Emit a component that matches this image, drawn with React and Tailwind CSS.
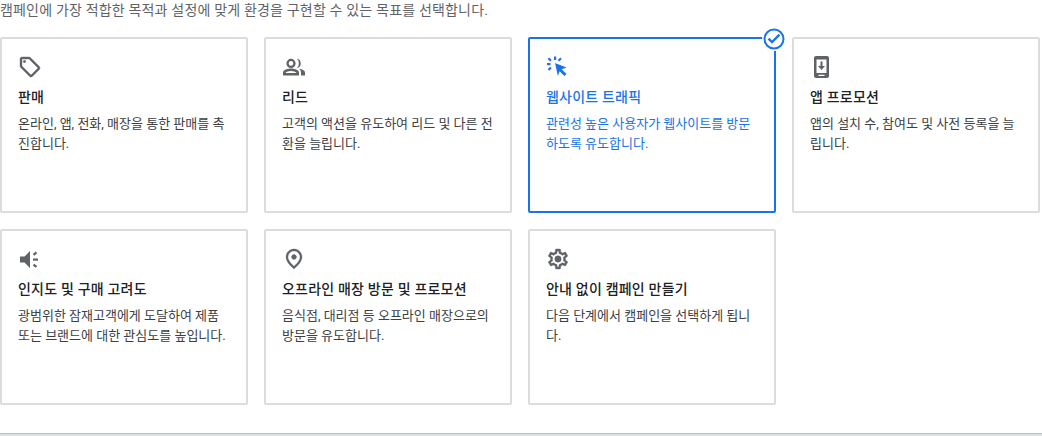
const goals = [
  { icon: "tag", title: "판매", text: "온라인, 앱, 전화, 매장을 통한 판매를 촉진합니다." },
  { icon: "people", title: "리드", text: "고객의 액션을 유도하여 리드 및 다른 전환을 늘립니다." },
  { icon: "click", title: "웹사이트 트래픽", text: "관련성 높은 사용자가 웹사이트를 방문하도록 유도합니다.", selected: true },
  { icon: "phone", title: "앱 프로모션", text: "앱의 설치 수, 참여도 및 사전 등록을 늘립니다." },
  { icon: "speaker", title: "인지도 및 구매 고려도", text: "광범위한 잠재고객에게 도달하여 제품 또는 브랜드에 대한 관심도를 높입니다." },
  { icon: "pin", title: "오프라인 매장 방문 및 프로모션", text: "음식점, 대리점 등 오프라인 매장으로의 방문을 유도합니다." },
  { icon: "gear", title: "안내 없이 캠페인 만들기", text: "다음 단계에서 캠페인을 선택하게 됩니다." },
];

const Icon = ({ name }) => {
  const paths = {
    tag: (
      <g stroke="currentColor" strokeWidth="0.4">
        <path d="M21.41 11.58l-9-9C12.05 2.22 11.55 2 11 2H4c-1.1 0-2 .9-2 2v7c0 .55.22 1.05.59 1.42l9 9c.36.36.86.58 1.41.58s1.05-.22 1.41-.59l7-7c.37-.36.59-.86.59-1.41s-.23-1.06-.59-1.42zM13 20.01L4 11V4h7v-.01l9 8.99-7 7.02z" />
        <circle cx="6.5" cy="6.5" r="1.2" />
      </g>
    ),
    people: (
      <path
        fillRule="evenodd"
        d="M9 3.800a4.600 4.600 0 1 1 0 9.200 4.600 4.600 0 0 1 0-9.200zm0 2.300a2.300 2.300 0 1 0 0 4.600 2.300 2.300 0 0 0 0-4.600zM9 13.600c3 0 8 1.400 8 4V20.400H1v-2.800c0-2.600 5-4 8-4zm0 2.300c-2.400 0-5 .8-5.600 2.200h11.200C14 16.700 11.400 15.900 9 15.900zM15 3.800a4.700 4.700 0 0 1 0 9.200 6.500 6.500 0 0 0 0-9.200zM17 13.700c2.800.4 6 1.600 6 3.700v3h-4v-2.800c0-1.500-.8-2.900-2-3.900z"
      />
    ),
    click: (
      <>
        <path d="M9 8l11.500 4.500-4.800 1.700 4.800 4.800-2.100 2.100-4.800-4.800-1.700 4.800z" />
        <rect x="8" y="1.500" width="2.200" height="3.500" />
        <rect x="1" y="8" width="3.500" height="2.200" />
        <path d="M3.200 2.400l2.500 2.500-1.500 1.500-2.500-2.500zM14.300 2.400l1.500 1.500-2.500 2.500-1.500-1.500zM4.200 11.800l1.500 1.500-2.500 2.500-1.500-1.500z" />
      </>
    ),
    phone: (
      <path
        fillRule="evenodd"
        d="M6 1h11c1.100 0 2 .9 2 2v18c0 1.100-.9 2-2 2H6c-1.100 0-2-.9-2-2V3c0-1.100.9-2 2-2zm.5 3.500V18h10V4.500h-10zM8.500 19.800v1.300h6v-1.300h-6zM10.500 6.500h2V11h2.500l-3.500 4L8 11h2.500z"
      />
    ),
    speaker: (
      <>
        <path d="M2 9.500h4.500L12 4v17l-5.500-5.500H2z" />
        <rect x="15" y="11.500" width="5" height="2.200" />
        <path d="M14.800 7l3-2.400 1.400 1.700-3 2.400zM16.200 16.700l3 2.400-1.400 1.700-3-2.400z" />
      </>
    ),
    pin: (
      <g stroke="currentColor" strokeWidth="0.3">
        <path
          fillRule="evenodd"
          d="M12 12.500c-1.400 0-2.500-1.100-2.500-2.500s1.100-2.500 2.500-2.500 2.500 1.100 2.500 2.500-1.100 2.500-2.500 2.500zm6-2.300C18 6.570 15.350 4 12 4s-6 2.570-6 6.200c0 2.340 1.950 5.440 6 9.140 4.050-3.700 6-6.800 6-9.140zM12 2c4.200 0 8 3.220 8 8.200 0 3.320-2.670 7.250-8 11.800-5.330-4.550-8-8.480-8-11.800C4 5.220 7.800 2 12 2z"
        />
      </g>
    ),
    gear: (
      <g stroke="currentColor" strokeWidth="0.4">
        <path d="M19.430 12.980c.04-.32.07-.64.07-.98 0-.34-.03-.66-.07-.98l2.110-1.650c.19-.15.24-.42.12-.64l-2-3.460c-.09-.16-.26-.25-.44-.25-.06 0-.12.01-.17.03l-2.490 1c-.52-.4-1.080-.73-1.690-.98l-.38-2.650C14.460 2.180 14.250 2 14 2h-4c-.25 0-.46.18-.49.42l-.38 2.650c-.61.25-1.170.59-1.690.98l-2.490-1c-.06-.02-.12-.03-.18-.03-.17 0-.34.09-.43.25l-2 3.460c-.13.22-.07.49.12.64l2.110 1.650c-.04.32-.07.65-.07.98 0 .33.03.66.07.98l-2.110 1.650c-.19.15-.24.42-.12.64l2 3.460c.09.16.26.25.44.25.06 0 .12-.01.17-.03l2.490-1c.52.4 1.080.73 1.690.98l.38 2.650c.03.24.24.42.49.42h4c.25 0 .46-.18.49-.42l.38-2.650c.61-.25 1.170-.59 1.690-.98l2.490 1c.06.02.12.03.18.03.17 0 .34-.09.43-.25l2-3.460c.12-.22.07-.49-.12-.64l-2.110-1.650zm-1.980-1.710c.04.31.05.52.05.73 0 .21-.02.43-.05.73l-.14 1.130.89.7 1.080.84-.7 1.210-1.270-.51-1.040-.42-.9.68c-.43.32-.84.56-1.250.73l-1.060.43-.16 1.130-.2 1.350h-1.400l-.19-1.350-.16-1.130-1.060-.43c-.43-.18-.83-.41-1.230-.71l-.91-.7-1.060.43-1.270.51-.7-1.210 1.080-.84.89-.7-.14-1.130c-.03-.31-.05-.54-.05-.74s.02-.43.05-.73l.14-1.130-.89-.7-1.080-.84.7-1.210 1.270.51 1.040.42.9-.68c.43-.32.84-.56 1.250-.73l1.060-.43.16-1.130.2-1.350h1.390l.19 1.350.16 1.130 1.060.43c.43.18.83.41 1.230.71l.91.7 1.060-.43 1.270-.51.7 1.210-1.070.85-.89.7.14 1.130z" />
        <circle cx="12" cy="12" r="3.200" />
      </g>
    ),
  };
  return (
    <svg viewBox="0 0 24 24" fill="currentColor" className="h-6 w-6">
      {paths[name]}
    </svg>
  );
};

const GoalCard = ({ goal }) => (
  <div
    className={
      goal.selected
        ? "relative h-[176px] rounded-[2px] border-2 border-[#1a73e8] px-4 pt-4 text-[#1a73e8]"
        : "relative h-[176px] rounded-[2px] border-2 border-[#dadce0] px-4 pt-4 text-[#3c4043]"
    }
  >
    <div className={goal.selected ? "text-[#1a73e8]" : "text-[#5f6368]"}>
      <Icon name={goal.icon} />
    </div>
    <div
      className={
        goal.selected
          ? "mt-2 text-[14px] leading-5 font-medium tracking-[0.2px] text-[#1a73e8]"
          : "mt-2 text-[14px] leading-5 font-medium tracking-[0.2px] text-[#202124]"
      }
    >
      {goal.title}
    </div>
    <p className="mt-[7px] text-[13px] leading-5 break-all">{goal.text}</p>
    {goal.selected && (
      <div className="absolute -top-[12px] -right-[12px] flex h-6 w-6 items-center justify-center rounded-full bg-white">
        <svg viewBox="0 0 24 24" className="h-[24px] w-[24px]" fill="#1a73e8">
          <path d="M12 1.500a10.500 10.500 0 1 0 0 21 10.500 10.500 0 0 0 0-21zm0 2a8.500 8.500 0 1 1 0 17 8.500 8.500 0 0 1 0-17z" fillRule="evenodd" />
          <path d="M10 16.800l-4.300-4.300 1.700-1.700 2.600 2.600 6.600-6.600 1.700 1.700z" />
        </svg>
      </div>
    )}
  </div>
);

export default function App() {
  return (
    <div className="h-[436px] w-[1042px] overflow-hidden bg-white font-['Roboto','Noto_Sans_CJK_KR',sans-serif]">
      <p className="h-[37px] pt-px text-[14px] leading-[18px] tracking-[0.18px] text-[#5f6368]">
        캠페인에 가장 적합한 목적과 설정에 맞게 환경을 구현할 수 있는 목표를 선택합니다.
      </p>
      <div className="grid w-[1040px] grid-cols-4 gap-4">
        {goals.map((goal) => (
          <GoalCard key={goal.title} goal={goal} />
        ))}
      </div>
      <div className="mt-[28px] h-[3px] w-full border-t border-[#bdc1c6] bg-[#dcdfdf]" />
    </div>
  );
}
